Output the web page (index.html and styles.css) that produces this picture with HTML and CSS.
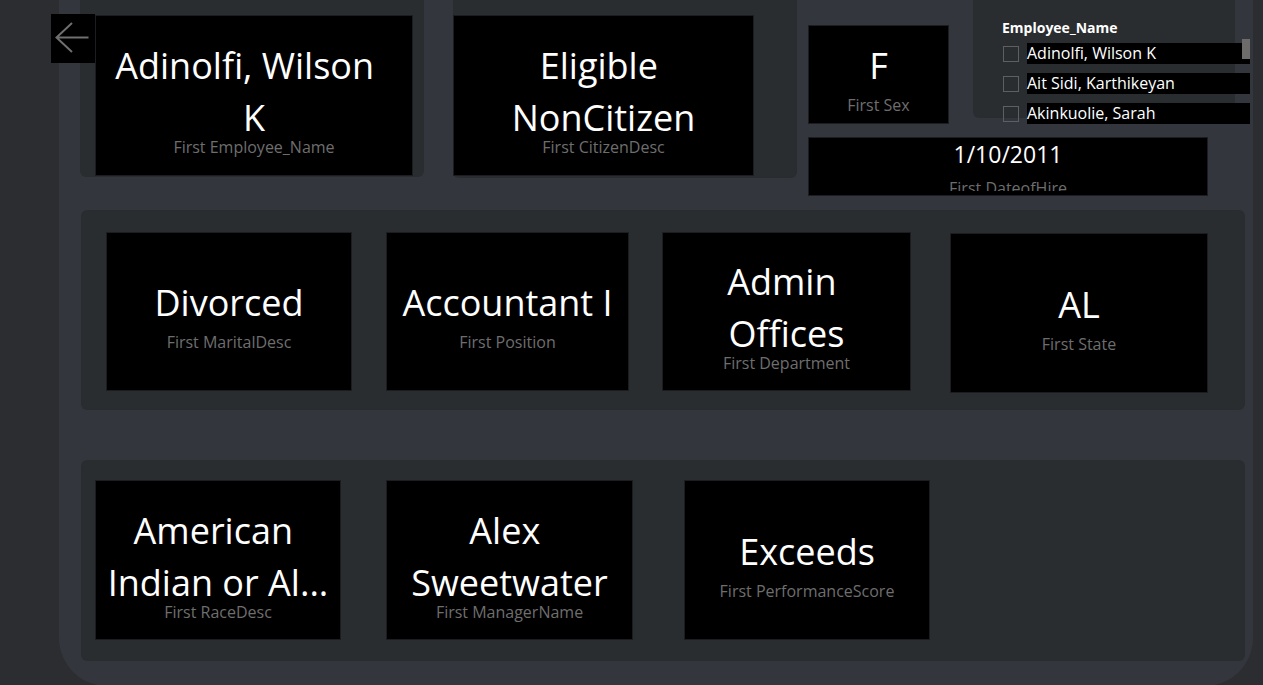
FILE: index.html
```html
<!DOCTYPE html>
<html lang="en">
<head>
<meta charset="utf-8">
<title>Employee Details</title>
<link rel="stylesheet" href="styles.css">
</head>
<body>
<div class="canvas">
  <button class="back" aria-label="Back">
    <svg width="44" height="49" viewBox="0 0 44 49"><path d="M37.5 23.5H5.5M21 9L5.5 23.5L21 38" fill="none" stroke="#6f6f6f" stroke-width="2"/></svg>
  </button>

  <div class="top-row">
    <div class="panel panel-a">
      <div class="card card-name multi">
        <div class="value">Adinolfi, Wilson&nbsp;&nbsp;<br>K</div>
        <div class="label">First Employee_Name</div>
      </div>
    </div>
    <div class="panel panel-b">
      <div class="card card-citizen multi">
        <div class="value">Eligible&nbsp;<br>NonCitizen</div>
        <div class="label">First CitizenDesc</div>
      </div>
    </div>
    <div class="right-grid">
      <div class="card card-sex">
        <div class="value">F</div>
        <div class="label">First Sex</div>
      </div>
      <div class="slicer">
        <div class="slicer-title">Employee_Name</div>
        <ul class="slicer-list">
          <li class="slicer-item"><span class="check"></span><span class="item-text">Adinolfi, Wilson K</span></li>
          <li class="slicer-item"><span class="check"></span><span class="item-text">Ait Sidi, Karthikeyan</span></li>
          <li class="slicer-item"><span class="check"></span><span class="item-text">Akinkuolie, Sarah</span></li>
        </ul>
        <div class="scroll-thumb"></div>
      </div>
      <div class="card card-date">
        <div class="clip">
          <div class="value">1/10/2011</div>
          <div class="label">First DateofHire</div>
        </div>
      </div>
    </div>
  </div>

  <div class="panel row row-2">
    <div class="card c-marital">
      <div class="value">Divorced</div>
      <div class="label">First MaritalDesc</div>
    </div>
    <div class="card c-position">
      <div class="value">Accountant I</div>
      <div class="label">First Position</div>
    </div>
    <div class="card c-dept multi">
      <div class="value">Admin&nbsp;<br>Offices</div>
      <div class="label">First Department</div>
    </div>
    <div class="card c-state">
      <div class="value">AL</div>
      <div class="label">First State</div>
    </div>
  </div>

  <div class="panel row row-3">
    <div class="card c-race multi">
      <div class="value">American&nbsp;<br>Indian or Al...</div>
      <div class="label">First RaceDesc</div>
    </div>
    <div class="card c-manager multi">
      <div class="value">Alex&nbsp;<br>Sweetwater</div>
      <div class="label">First ManagerName</div>
    </div>
    <div class="card c-perf">
      <div class="value">Exceeds</div>
      <div class="label">First PerformanceScore</div>
    </div>
  </div>
</div>
</body>
</html>
```

FILE: styles.css
```css
* { box-sizing: border-box; }

html, body {
  margin: 0;
  padding: 0;
  width: 1263px;
  height: 685px;
  overflow: hidden;
  background: #2b2d31;
  font-family: "Open Sans", "Noto Sans", sans-serif;
}

.canvas {
  position: relative;
  margin-left: 59px;
  width: 1194px;
  height: 686px;
  background: #33363d;
  border-radius: 0 0 48px 48px;
}

.back {
  position: absolute;
  left: -8px;
  top: 14px;
  width: 44px;
  height: 49px;
  padding: 0;
  border: 0;
  background: #000;
  z-index: 2;
}
.back svg { display: block; }

.panel {
  background: #2a2d30;
  border-radius: 6px;
}

/* cards */
.card {
  display: flex;
  flex-direction: column;
  align-items: center;
  justify-content: center;
  padding-top: 6px;
  background: #000;
  border: 1px solid #1c1d20;
  text-align: center;
  white-space: nowrap;
  color: #fff;
}
.value {
  font-size: 36px;
  line-height: 52px;
  color: #fff;
}
.label {
  margin-top: 3px;
  font-size: 16px;
  line-height: 20px;
  color: #6e6e6e;
}
.card.multi .label { margin-top: -7px; }

/* top row */
.top-row {
  display: flex;
  align-items: flex-start;
  height: 196px;
}
.panel-a {
  margin-left: 21px;
  width: 344px;
  height: 177px;
  padding: 15px 0 0 15px;
  border-radius: 0 0 6px 6px;
}
.card-name { width: 318px; height: 161px; }

.panel-b {
  margin-left: 29px;
  width: 344px;
  height: 178px;
  padding-top: 15px;
  border-radius: 0 0 6px 6px;
}
.card-citizen { width: 301px; height: 161px; }

.right-grid {
  margin-left: 11px;
  display: grid;
  grid-template-columns: 141px 24px 262px;
  grid-template-rows: 124px auto;
}
.card-sex {
  grid-column: 1;
  grid-row: 1;
  margin-top: 25px;
  height: 99px;
}
.card-date {
  grid-column: 1 / span 3;
  grid-row: 2;
  width: 400px;
  height: 59px;
  margin-top: 13px;
  padding-top: 0;
  justify-content: flex-start;
}
.card-date .clip {
  height: 53px;
  overflow: hidden;
  display: flex;
  flex-direction: column;
  align-items: center;
}
.card-date .value {
  font-size: 23px;
  line-height: 32px;
}
.card-date .label { margin-top: 8px; }

/* slicer */
.slicer {
  position: relative;
  grid-column: 3;
  grid-row: 1;
  align-self: start;
  height: 118px;
  padding: 18px 0 0 29px;
  background: #2a2d30;
  border-radius: 0 0 6px 6px;
}
.slicer-title {
  font-size: 14px;
  line-height: 19px;
  font-weight: 700;
  color: #fff;
}
.slicer-list {
  list-style: none;
  margin: 6px 0 0 0;
  padding: 0;
  display: flex;
  flex-direction: column;
  gap: 9px;
}
.slicer-item {
  display: flex;
  align-items: center;
  height: 21px;
  padding-left: 1px;
}
.check {
  width: 16px;
  height: 16px;
  border: 1px solid #5e5f61;
  flex: none;
}
.item-text {
  margin-left: 8px;
  width: 223px;
  height: 21px;
  padding-left: 0;
  background: #000;
  color: #fff;
  font-size: 16px;
  line-height: 21px;
  white-space: nowrap;
  flex: none;
}
.scroll-thumb {
  position: absolute;
  left: 269px;
  top: 39px;
  width: 8px;
  height: 20px;
  background: #6d6c6b;
}

/* rows */
.row {
  display: flex;
  align-items: flex-start;
  margin-left: 22px;
  width: 1164px;
  height: 200px;
}
.row-2 {
  margin-top: 14px;
  padding: 22px 0 0 25px;
}
.row-2 .card { height: 159px; }
.c-marital { width: 246px; }
.c-position { width: 243px; margin-left: 34px; }
.c-dept { width: 249px; margin-left: 33px; }
.row-2 .c-state { width: 258px; height: 160px; margin-left: 39px; margin-top: 1px; }

.row-3 {
  margin-top: 50px;
  height: 201px;
  padding: 20px 0 0 14px;
}
.row-3 .card { height: 160px; }
.c-race { width: 246px; }
.c-manager { width: 247px; margin-left: 45px; }
.c-perf { width: 246px; margin-left: 51px; }
```
